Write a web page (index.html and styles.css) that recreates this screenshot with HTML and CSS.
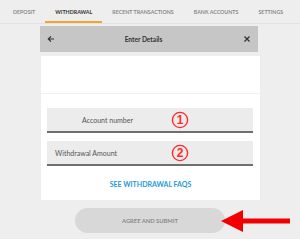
FILE: index.html
```html
<!DOCTYPE html>
<html>
<head>
<meta charset="utf-8">
<link rel="stylesheet" href="styles.css">
</head>
<body>
<nav class="tabs">
  <div class="tab">DEPOSIT</div>
  <div class="tab active">WITHDRAWAL</div>
  <div class="tab">RECENT TRANSACTIONS</div>
  <div class="tab">BANK ACCOUNTS</div>
  <div class="tab">SETTINGS</div>
</nav>
<main class="modal">
  <header class="modal-head">
    <svg class="icon" width="8" height="8" viewBox="0 0 8 8"><path d="M7 4H1.5M4 1.3L1.3 4 4 6.7" fill="none" stroke="#333" stroke-width="1.2"/></svg>
    <span class="title">Enter Details</span>
    <svg class="icon" width="8" height="8" viewBox="0 0 8 8"><path d="M1.5 1.5L6.5 6.5M6.5 1.5L1.5 6.5" fill="none" stroke="#333" stroke-width="1.3"/></svg>
  </header>
  <section class="card">
    <div class="card-top"></div>
    <div class="fields">
      <div class="field">
        <span class="label indent">Account number</span>
        <svg class="mark" width="18" height="18" viewBox="0 0 18 18"><circle cx="9" cy="9" r="7.6" fill="none" stroke="#ff2b2b" stroke-width="1.4"/><text x="9" y="13.2" text-anchor="middle" font-family="Liberation Sans, sans-serif" font-size="12" font-weight="700" fill="#ff2b2b">1</text></svg>
      </div>
      <div class="field">
        <span class="label">Withdrawal Amount</span>
        <svg class="mark" width="18" height="18" viewBox="0 0 18 18"><circle cx="9" cy="9" r="7.6" fill="none" stroke="#ff2b2b" stroke-width="1.4"/><text x="9" y="13.2" text-anchor="middle" font-family="Liberation Sans, sans-serif" font-size="12" font-weight="700" fill="#ff2b2b">2</text></svg>
      </div>
    </div>
    <a class="faq">SEE WITHDRAWAL FAQS</a>
  </section>
  <div class="submit-row">
    <button class="submit">AGREE AND SUBMIT</button>
  </div>
</main>
<svg class="arrow" width="76" height="28" viewBox="0 0 76 28"><path d="M3 14L25 3V11.5H72V16.5H25V25Z" fill="#f20000"/></svg>
</body>
</html>
```
FILE: styles.css
```css
* { box-sizing: border-box; }
html, body { margin: 0; padding: 0; }
body {
  width: 300px;
  height: 239px;
  background: #eeeeee;
  font-family: Lato, "Open Sans", sans-serif;
  position: relative;
  overflow: hidden;
}
.tabs {
  display: flex;
  height: 24px;
  padding-left: 3px;
  border-bottom: 1px solid #e2e2e2;
}
.tab {
  padding: 0 10px;
  font-size: 5.3px;
  font-weight: 700;
  color: #8a8a8a;
  display: flex;
  align-items: center;
  height: 23px;
  padding-top: 1px;
  white-space: nowrap;
  flex: none;
}
.tab.active {
  color: #333;
  border-bottom: 2px solid #f5a330;
  padding-top: 3px;
}
.modal {
  width: 220px;
  margin: 2px 0 0 40px;
}
.modal-head {
  height: 26px;
  background: #c6c6c6;
  display: flex;
  align-items: center;
  padding: 0 7px 0 7px;
  width: 218px;
}
.icon { flex: none; }
.title {
  flex: 1;
  text-align: center;
  font-size: 6.6px;
  font-weight: 700;
  color: #333;
  padding-right: 11px;
}
.card {
  margin: 4px 0 0 1px;
  width: 219px;
  height: 144px;
  background: #fff;
  display: flex;
  flex-direction: column;
}
.card-top {
  height: 38px;
  border-bottom: 1px solid #f1f1f1;
}
.fields {
  display: flex;
  flex-direction: column;
  gap: 8px;
  padding: 14px 7px 0 6px;
}
.field {
  position: relative;
  height: 25px;
  background: #ececec;
  border-bottom: 2px solid #6f6f6f;
  display: flex;
  align-items: center;
  padding-left: 8px;
}
.label {
  font-size: 7px;
  color: #555;
}
.label.indent { padding-left: 27px; }
.mark {
  position: absolute;
  left: 124px;
  top: 3px;
}
.faq {
  margin-top: 14px;
  text-align: center;
  font-size: 7px;
  font-weight: 700;
  color: #1e9ad8;
}
.submit-row {
  display: flex;
  padding: 8px 0 0 35px;
}
.submit {
  width: 150px;
  height: 25px;
  border: none;
  border-radius: 12.5px;
  background: #d8d8d8;
  color: #8a8a8a;
  font-family: Lato, sans-serif;
  font-size: 5.8px;
  font-weight: 700;
  padding: 0;
}
.arrow {
  position: absolute;
  left: 218px;
  top: 207px;
}
```
